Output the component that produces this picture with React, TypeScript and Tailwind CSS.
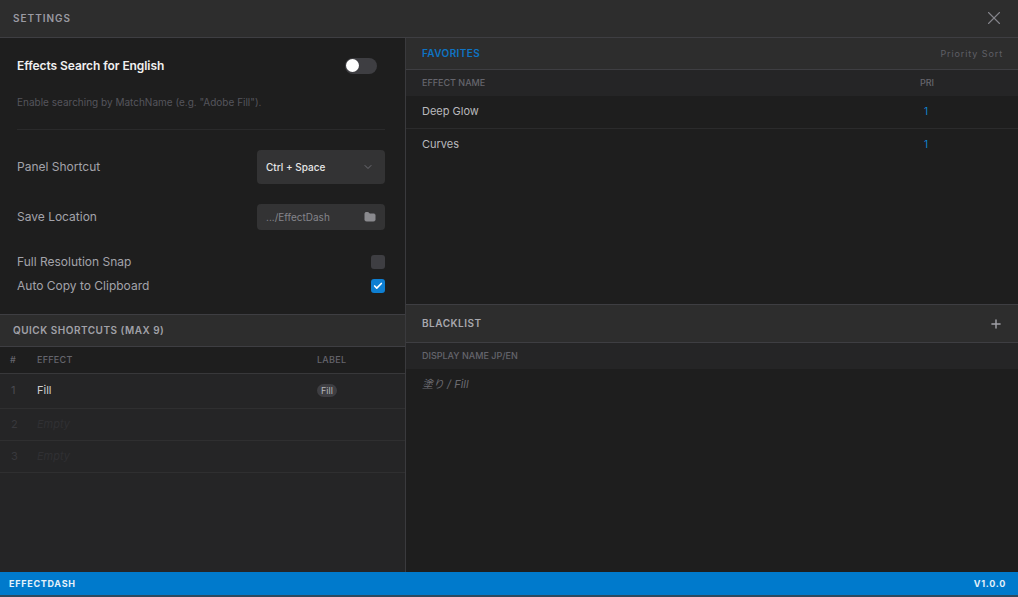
import { Check, ChevronDown, Folder, Plus, X } from 'lucide-react'

const sans = 'font-["Inter","Noto_Sans_CJK_JP",sans-serif]'

function SettingRow({ label, children, className }: { label: string; children: React.ReactNode; className: string }) {
  return (
    <div className={`flex items-center justify-between ${className}`}>
      <span className="text-[12px] text-[#a3a3aa]">{label}</span>
      {children}
    </div>
  )
}

function ShortcutRow({ n, effect, label }: { n: number; effect: string; label?: string }) {
  const empty = !label
  return (
    <div className={`flex items-center border-b border-[#2f2f30] ${n === 1 ? 'h-[35px] pb-[2px]' : 'h-[32px]'}`}>
      <span className={`w-[37px] pl-[11px] text-[11px] ${empty ? 'text-[#38383c]' : 'text-[#4a4a50]'}`}>{n}</span>
      <span className={`w-[280px] text-[11px] ${empty ? 'italic text-[#303033]' : 'text-[#d0d0d0]'}`}>{effect}</span>
      {label && <span className="rounded-full bg-[#3e3e42] px-[4px] text-[9px] leading-[13px] text-[#b4b4b8]">{label}</span>}
    </div>
  )
}

function FavoriteRow({ name, last }: { name: string; last?: boolean }) {
  return (
    <div className={`flex h-[33px] items-center pl-[16px] text-[11px] text-[#b9b9bd] ${last ? 'pb-[2px]' : 'border-b border-[#2b2b2c] pb-[1px]'}`}>
      <span className="w-[502px]">{name}</span>
      <span className="text-[10px] text-[#0e85d4]">1</span>
    </div>
  )
}

export default function App() {
  return (
    <div className={`flex h-[597px] w-[1018px] flex-col overflow-hidden bg-[#252526] ${sans}`}>
      {/* Title bar */}
      <div className="flex h-[38px] shrink-0 items-center justify-between border-b border-[#3e3e42] bg-[#2d2d2d] pb-[1px] pl-[13px] pr-[13px]">
        <span className="text-[10px] font-semibold tracking-[0.1em] text-[#9a9aa2]">SETTINGS</span>
        <X size={22} strokeWidth={1.2} className="text-[#85858c]" />
      </div>

      <div className="flex min-h-0 flex-1">
        {/* Left column */}
        <div className="flex w-[406px] shrink-0 flex-col border-r border-[#3a3a3d]">
          <div className="h-[276px] shrink-0 bg-[#1e1e1e] pl-[17px] pr-[20px]">
            <div className="flex h-[55px] items-center justify-between">
              <span className="text-[12px] font-semibold tracking-[-0.0065em] text-[#f0f0f0]">Effects Search for English</span>
              <div className="mr-[8px] flex h-[16px] w-[32px] items-center rounded-full bg-[#3e3e42] pl-[1px]">
                <div className="h-[13px] w-[13px] rounded-full bg-white" />
              </div>
            </div>
            <p className="text-[10px] leading-[18px] text-[#55555c]">Enable searching by MatchName (e.g. "Adobe Fill").</p>
            <div className="mt-[18px] border-t border-[#2a2a2b]" />
            <SettingRow label="Panel Shortcut" className="mt-[20px] h-[34px]">
              <div className="flex h-[34px] w-[128px] items-center justify-between rounded-[4px] bg-[#333334] pl-[9px] pr-[11px] text-[10px] font-medium text-[#e6e6e6]">
                Ctrl + Space
                <ChevronDown size={12} className="text-[#6d6d73]" />
              </div>
            </SettingRow>
            <SettingRow label="Save Location" className="mt-[20px] h-[26px]">
              <div className="flex h-[26px] w-[128px] items-center justify-between rounded-[4px] bg-[#333334] pl-[9px] pr-[9px] text-[10px] text-[#85858b]">
                .../EffectDash
                <Folder size={12} fill="currentColor" className="text-[#8a8a8e]" />
              </div>
            </SettingRow>
            <SettingRow label="Full Resolution Snap" className="mt-[20px] h-[24px]">
              <div className="h-[14px] w-[14px] rounded-[3px] bg-[#3e3e42]" />
            </SettingRow>
            <SettingRow label="Auto Copy to Clipboard" className="h-[24px]">
              <div className="flex h-[14px] w-[14px] items-center justify-center rounded-[3px] bg-[#0e7fd2]">
                <Check size={10} strokeWidth={4} className="text-white" />
              </div>
            </SettingRow>
          </div>

          <div className="flex h-[33px] shrink-0 items-center border-y border-[#3e3e42] bg-[#2d2d2d] pl-[13px]">
            <span className="text-[10px] font-semibold tracking-[0.05em] text-[#a1a1a8]">QUICK SHORTCUTS (MAX 9)</span>
          </div>
          <div className="flex h-[27px] shrink-0 items-center border-b border-[#38383a] bg-[#1e1e1e] text-[9px] font-medium tracking-[0.03em] text-[#65656d]">
            <span className="w-[37px] pl-[10px]">#</span>
            <span className="w-[280px]">EFFECT</span>
            <span>LABEL</span>
          </div>
          <ShortcutRow n={1} effect="Fill" label="Fill" />
          <ShortcutRow n={2} effect="Empty" />
          <ShortcutRow n={3} effect="Empty" />
        </div>

        {/* Right column */}
        <div className="flex min-w-0 flex-1 flex-col">
          <div className="flex h-[32px] shrink-0 items-center justify-between border-b border-[#3e3e42] bg-[#2d2d2d] pl-[16px] pr-[15px]">
            <span className="text-[10px] font-semibold tracking-[0.04em] text-[#0e74c4]">FAVORITES</span>
            <span className="text-[9px] tracking-[0.1em] text-[#5f5f66]">Priority Sort</span>
          </div>
          <div className="flex h-[26px] shrink-0 items-center bg-[#252526] pl-[16px] text-[9px] font-medium text-[#65656d]">
            <span className="w-[498px]">EFFECT NAME</span>
            <span>PRI</span>
          </div>
          <div className="h-[208px] shrink-0 bg-[#1e1e1e]">
            <FavoriteRow name="Deep Glow" />
            <FavoriteRow name="Curves" last />
          </div>

          <div className="flex h-[39px] shrink-0 items-center justify-between border-y border-[#3e3e42] bg-[#2d2d2d] pl-[16px] pr-[15px]">
            <span className="text-[10px] font-semibold tracking-[0.05em] text-[#a8a8ae]">BLACKLIST</span>
            <Plus size={14} strokeWidth={2.5} className="text-[#a0a0a6]" />
          </div>
          <div className="flex h-[26px] shrink-0 items-center bg-[#252526] pl-[16px] text-[9px] font-medium text-[#65656d]">
            DISPLAY NAME JP/EN
          </div>
          <div className="flex-1 bg-[#1e1e1e] pl-[16px] pt-[7px] text-[11px] italic leading-[16px] text-[#6a6a70]">
            塗り / Fill
          </div>
        </div>
      </div>

      {/* Status bar */}
      <div className="flex h-[23px] shrink-0 items-center justify-between bg-[#007acc] pl-[9px] pr-[12px] text-[9px] font-bold tracking-[0.08em] text-[#e4f1fa]">
        <span>EFFECTDASH</span>
        <span>V1.0.0</span>
      </div>
      <div className="h-[2px] shrink-0 bg-[#2d4a60]" />
    </div>
  )
}
